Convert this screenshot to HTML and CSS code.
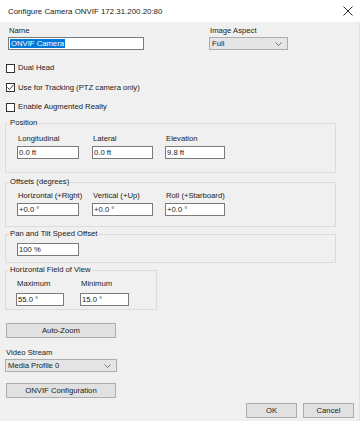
FILE: index.html
```html
<!DOCTYPE html>
<html lang="en">
<head>
  <meta charset="UTF-8" />
  <title>Configure Camera ONVIF</title>
  <link rel="stylesheet" href="styles.css">
</head>
<body>
  <div class="janela">
    <div class="barra-titulo">
      <span class="titulo">Configure Camera ONVIF 172.31.200.20:80</span>
      <svg class="fechar" width="10" height="10" viewBox="0 0 10 10"><path d="M0.5 0.5 L9.5 9.5 M9.5 0.5 L0.5 9.5" stroke="#111" stroke-width="0.9" fill="none"/></svg>
    </div>

    <div class="corpo">
      <div class="linha-topo">
        <div class="campo campo-nome">
          <div class="rotulo">Name</div>
          <div class="texto nome"><span class="selecionado">ONVIF Camera</span></div>
        </div>
        <div class="campo campo-aspecto">
          <div class="rotulo">Image Aspect</div>
          <div class="combo aspecto">Full
            <svg class="seta" width="7" height="4" viewBox="0 0 7 4"><path d="M0.5 0.5 L3.5 3.5 L6.5 0.5" stroke="#555" stroke-width="0.8" fill="none"/></svg>
          </div>
        </div>
      </div>

      <div class="opcoes">
        <div class="opcao"><span class="caixa"></span>Dual Head</div>
        <div class="opcao"><span class="caixa">
          <svg width="9" height="9" viewBox="0 0 9 9"><path d="M1.5 4.5 L3.5 6.5 L7.5 1.8" stroke="#222" stroke-width="0.9" fill="none"/></svg>
        </span>Use for Tracking (PTZ camera only)</div>
        <div class="opcao"><span class="caixa"></span>Enable Augmented Realty</div>
      </div>

      <fieldset class="grupo largo posicao">
        <legend>Position</legend>
        <div class="colunas">
          <div class="campo col-1"><div class="rotulo">Longitudinal</div><div class="texto">0.0 ft</div></div>
          <div class="campo col-2"><div class="rotulo">Lateral</div><div class="texto">0.0 ft</div></div>
          <div class="campo col-3"><div class="rotulo">Elevation</div><div class="texto">9.8 ft</div></div>
        </div>
      </fieldset>

      <fieldset class="grupo largo offsets">
        <legend>Offsets (degrees)</legend>
        <div class="colunas">
          <div class="campo col-1"><div class="rotulo">Horizontal (+Right)</div><div class="texto">+0.0 °</div></div>
          <div class="campo col-2"><div class="rotulo">Vertical (+Up)</div><div class="texto">+0.0 °</div></div>
          <div class="campo col-3"><div class="rotulo">Roll (+Starboard)</div><div class="texto">+0.0 °</div></div>
        </div>
      </fieldset>

      <fieldset class="grupo largo velocidade">
        <legend>Pan and Tilt Speed Offset</legend>
        <div class="colunas">
          <div class="campo col-1"><div class="texto">100 %</div></div>
        </div>
      </fieldset>

      <fieldset class="grupo campo-visao">
        <legend>Horizontal Field of View</legend>
        <div class="colunas">
          <div class="campo fov-1"><div class="rotulo">Maximum</div><div class="texto">55.0 °</div></div>
          <div class="campo fov-2"><div class="rotulo">Minimum</div><div class="texto">15.0 °</div></div>
        </div>
      </fieldset>

      <div class="botao auto-zoom">Auto-Zoom</div>

      <div class="rotulo video">Video Stream</div>
      <div class="combo stream">Media Profile 0
        <svg class="seta" width="7" height="4" viewBox="0 0 7 4"><path d="M0.5 0.5 L3.5 3.5 L6.5 0.5" stroke="#555" stroke-width="0.8" fill="none"/></svg>
      </div>

      <div class="botao onvif">ONVIF Configuration</div>

      <div class="acoes">
        <div class="botao ok">OK</div>
        <div class="botao cancelar">Cancel</div>
      </div>
    </div>
  </div>
</body>
</html>
```

FILE: styles.css
```css
:root {
  --fundo: #f0f0f0;
  --borda-texto: #7a7a7a;
  --borda-grupo: #dcdcdc;
  --botao: #e1e1e1;
  --borda-botao: #adadad;
  --azul-sel: #0078d7;
  --preto: #1a1a1a;
}
* {
  box-sizing: border-box;
}
body {
  margin: 0;
  background: #fff;
  font-family: 'Liberation Sans', 'Noto Sans', sans-serif;
  font-size: 7.7px;
  color: var(--preto);
}
.janela {
  width: 360px;
  height: 424px;
  background: #fff;
}
.barra-titulo {
  height: 22px;
  display: flex;
  align-items: center;
  justify-content: space-between;
  padding: 0 7px 0 8px;
}
.titulo {
  font-size: 7.9px;
}
.corpo {
  height: 399px;
  background: var(--fundo);
  border-right: 1px solid #e2e2e2;
  padding-top: 4px;
}
.rotulo {
  line-height: 10px;
  height: 10px;
  white-space: nowrap;
}
.texto {
  height: 13px;
  margin-top: 2px;
  background: #fff;
  border: 1px solid var(--borda-texto);
  line-height: 11px;
  padding-left: 1px;
  white-space: nowrap;
}
.linha-topo {
  display: flex;
}
.campo-nome {
  margin-left: 8px;
  width: 136px;
}
.campo-nome .rotulo {
  padding-left: 2px;
}
.nome {
  margin-top: 1px;
}
.selecionado {
  background: var(--azul-sel);
  color: #fff;
  padding: 0 1px;
}
.campo-aspecto {
  margin-left: 65px;
  width: 79px;
}
.campo-aspecto .rotulo {
  padding-left: 1px;
}
.combo {
  height: 13px;
  background: #e5e5e5;
  border: 1px solid var(--borda-botao);
  line-height: 11px;
  padding-left: 2px;
  display: flex;
  justify-content: space-between;
  align-items: center;
  padding-right: 5px;
}
.aspecto {
  margin-top: 1px;
}
.opcoes {
  margin-top: 13px;
  padding-left: 6px;
  display: flex;
  flex-direction: column;
  gap: 9.5px;
}
.opcao {
  display: flex;
  align-items: center;
  height: 10px;
  line-height: 10px;
  gap: 3px;
}
.caixa {
  width: 9px;
  height: 9px;
  border: 1px solid #333;
  background: #fff;
  display: flex;
  align-items: center;
  justify-content: center;
}
.caixa svg {
  flex: none;
}
.grupo {
  margin: 0 0 0 5px;
  border: 1px solid var(--borda-grupo);
  padding: 0;
  min-width: 0;
}
.grupo legend {
  line-height: 10px;
  padding: 0 1px;
  margin-left: 3px;
  white-space: nowrap;
}
.largo {
  width: 331px;
}
.colunas {
  display: flex;
}
.col-1 { margin-left: 11px; width: 62px; }
.col-2 { margin-left: 13px; width: 61px; }
.col-3 { margin-left: 12px; width: 60px; }
.campo .rotulo {
  padding-left: 1px;
}
.posicao {
  margin-top: 6px;
  padding: 6px 0 13px;
}
.offsets {
  margin-top: 4px;
  padding: 4px 0 10px;
}
.velocidade {
  margin-top: 2px;
  padding: 4px 0 6px;
}
.velocidade .texto {
  margin-top: 0;
}
.campo-visao {
  width: 152px;
  margin-top: 2px;
  padding: 4px 0 3px;
}
.campo-visao .texto {
  margin-top: 4px;
}
.fov-1 { margin-left: 10px; width: 48px; }
.fov-2 { margin-left: 16px; width: 49px; }
.botao {
  height: 15px;
  background: var(--botao);
  border: 1px solid var(--borda-botao);
  line-height: 13px;
  text-align: center;
}
.auto-zoom {
  margin: 13px 0 0 6px;
  width: 110px;
}
.video {
  margin: 10px 0 0 6px;
}
.stream {
  margin: 1px 0 0 5px;
  width: 112px;
}
.onvif {
  margin: 11px 0 0 6px;
  width: 110px;
}
.acoes {
  display: flex;
  justify-content: flex-end;
  gap: 6px;
  margin-top: 5px;
  padding-right: 5px;
}
.ok, .cancelar {
  width: 51px;
}
```
